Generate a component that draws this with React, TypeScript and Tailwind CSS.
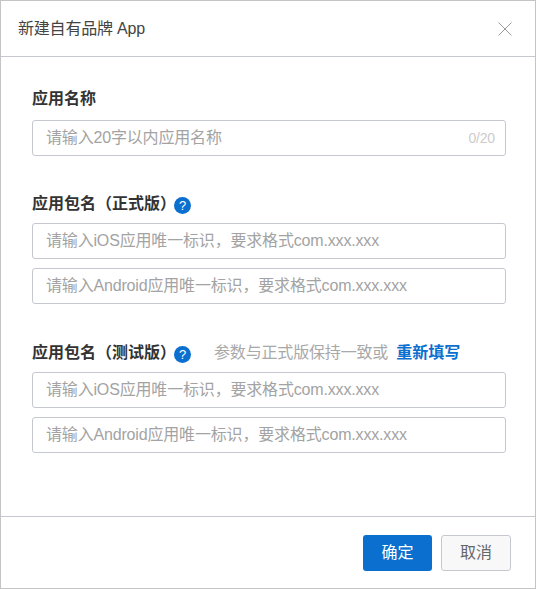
const font = { fontFamily: '"Liberation Sans", "Noto Sans CJK SC", sans-serif' };

function Field({ placeholder, count }: { placeholder: string; count?: string }) {
  return (
    <div className="flex h-9 items-center justify-between rounded-[3px] border border-[#c5c8ce] bg-white pl-[13px] pr-[10px] tracking-[-0.17px]">
      <span className="text-[16px] text-[#a3a3a3]">{placeholder}</span>
      {count && <span className="text-[14px] text-[#cccccc]">{count}</span>}
    </div>
  );
}

function Help() {
  return (
    <span className="mt-[3px] flex h-[17px] w-[17px] items-center justify-center rounded-full bg-[#0a6fce] text-[13px] font-medium text-white">
      ?
    </span>
  );
}

export default function App() {
  return (
    <div style={font} className="flex h-[589px] w-[536px] flex-col border border-[#c4c4c4] bg-white">
      <div className="flex h-[56px] shrink-0 items-center justify-between border-b border-[#c5c8ce] pl-[17px] pr-[23px]">
        <span className="text-[16px] tracking-[-0.2px] text-[#444444]">新建自有品牌 App</span>
        <svg className="mt-px" width="14" height="14" viewBox="0 0 14 14" fill="none" stroke="#9a9a9a" strokeWidth="1">
          <path d="M0.5 0.5l13 13M13.5 0.5l-13 13" />
        </svg>
      </div>

      <div className="flex-1 pl-[31px] pr-[29px] pt-[31px]">
        <div className="h-[22px] text-[16px] leading-[22px] font-bold text-[#333333]">应用名称</div>
        <div className="mt-[10px]">
          <Field placeholder="请输入20字以内应用名称" count="0/20" />
        </div>

        <div className="mt-[37px] flex h-[22px] items-center">
          <span className="text-[16px] font-bold text-[#333333]">应用包名（正式版）</span>
          <span className="ml-[-2px]">
            <Help />
          </span>
        </div>
        <div className="mt-[8px] flex flex-col gap-[9px]">
          <Field placeholder="请输入iOS应用唯一标识，要求格式com.xxx.xxx" />
          <Field placeholder="请输入Android应用唯一标识，要求格式com.xxx.xxx" />
        </div>

        <div className="mt-[38px] flex h-[22px] items-center">
          <span className="text-[16px] font-bold text-[#333333]">应用包名（测试版）</span>
          <span className="ml-[-2px]">
            <Help />
          </span>
          <span className="ml-[23px] text-[16px] tracking-[-0.17px] text-[#a8a8a8]">参数与正式版保持一致或</span>
          <span className="ml-[8px] text-[16px] font-bold text-[#0a6fce]">重新填写</span>
        </div>
        <div className="mt-[8px] flex flex-col gap-[9px]">
          <Field placeholder="请输入iOS应用唯一标识，要求格式com.xxx.xxx" />
          <Field placeholder="请输入Android应用唯一标识，要求格式com.xxx.xxx" />
        </div>
      </div>

      <div className="flex h-[72px] shrink-0 items-start justify-end gap-[9px] border-t border-[#c5c8ce] pr-[24px] pt-[18px]">
        <button className="h-9 w-[69px] rounded-[3px] bg-[#0a6fce] text-[16px] text-white">确定</button>
        <button className="h-9 w-[70px] rounded-[3px] border border-[#c5c8ce] bg-[#f8f8f8] text-[16px] text-[#666666]">取消</button>
      </div>
    </div>
  );
}
